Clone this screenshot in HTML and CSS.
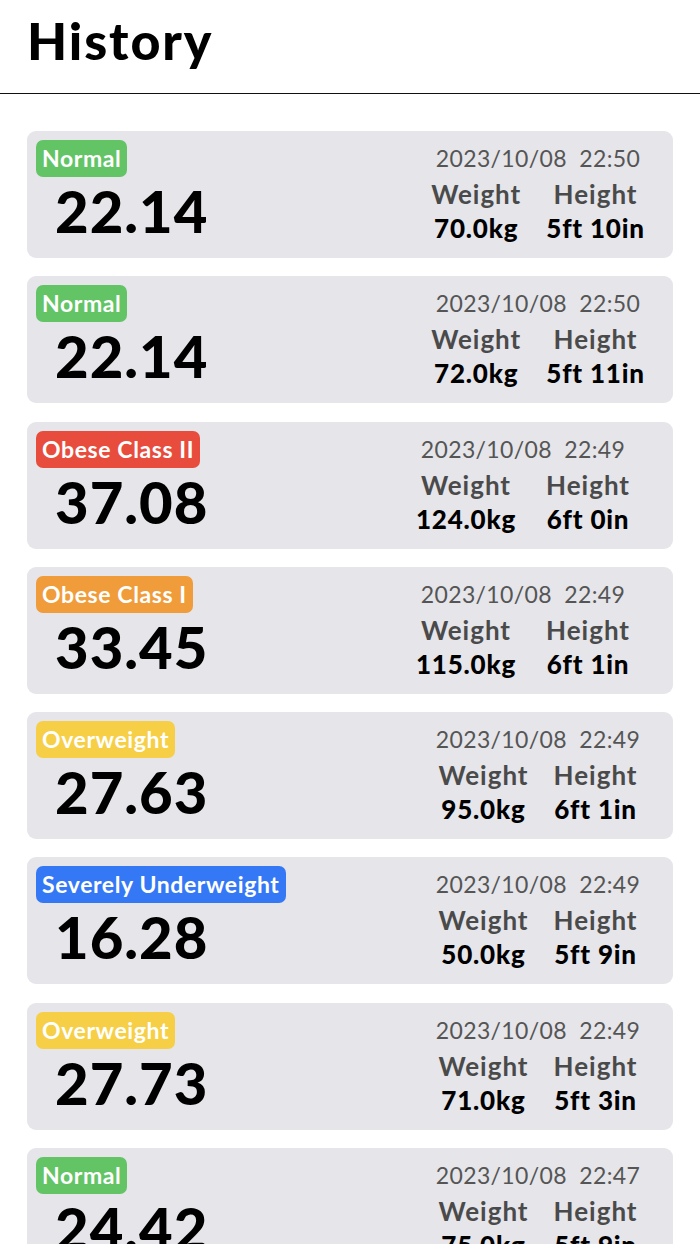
FILE: index.html
```html
<!DOCTYPE html>
<html>
<head>
<meta charset="utf-8">
<link rel="stylesheet" href="styles.css">
</head>
<body>
<header class="top">
  <h1 class="title">History</h1>
</header>
<main class="list">
  <div class="card">
    <div class="left"><span class="badge green">Normal</span><div class="bmi">22.14</div></div>
    <div class="info"><div class="date">2023/10/08&nbsp;&nbsp;22:50</div>
      <div class="row"><div class="col"><div class="lbl">Weight</div><div class="val">70.0kg</div></div><div class="col"><div class="lbl">Height</div><div class="val">5ft 10in</div></div></div></div>
  </div>
  <div class="card">
    <div class="left"><span class="badge green">Normal</span><div class="bmi">22.14</div></div>
    <div class="info"><div class="date">2023/10/08&nbsp;&nbsp;22:50</div>
      <div class="row"><div class="col"><div class="lbl">Weight</div><div class="val">72.0kg</div></div><div class="col"><div class="lbl">Height</div><div class="val">5ft 11in</div></div></div></div>
  </div>
  <div class="card">
    <div class="left"><span class="badge red">Obese Class II</span><div class="bmi">37.08</div></div>
    <div class="info wide"><div class="date">2023/10/08&nbsp;&nbsp;22:49</div>
      <div class="row"><div class="col"><div class="lbl">Weight</div><div class="val">124.0kg</div></div><div class="col"><div class="lbl">Height</div><div class="val">6ft 0in</div></div></div></div>
  </div>
  <div class="card">
    <div class="left"><span class="badge orange">Obese Class I</span><div class="bmi">33.45</div></div>
    <div class="info wide"><div class="date">2023/10/08&nbsp;&nbsp;22:49</div>
      <div class="row"><div class="col"><div class="lbl">Weight</div><div class="val">115.0kg</div></div><div class="col"><div class="lbl">Height</div><div class="val">6ft 1in</div></div></div></div>
  </div>
  <div class="card">
    <div class="left"><span class="badge yellow">Overweight</span><div class="bmi">27.63</div></div>
    <div class="info"><div class="date">2023/10/08&nbsp;&nbsp;22:49</div>
      <div class="row"><div class="col"><div class="lbl">Weight</div><div class="val">95.0kg</div></div><div class="col"><div class="lbl">Height</div><div class="val">6ft 1in</div></div></div></div>
  </div>
  <div class="card">
    <div class="left"><span class="badge blue">Severely Underweight</span><div class="bmi">16.28</div></div>
    <div class="info"><div class="date">2023/10/08&nbsp;&nbsp;22:49</div>
      <div class="row"><div class="col"><div class="lbl">Weight</div><div class="val">50.0kg</div></div><div class="col"><div class="lbl">Height</div><div class="val">5ft 9in</div></div></div></div>
  </div>
  <div class="card">
    <div class="left"><span class="badge yellow">Overweight</span><div class="bmi">27.73</div></div>
    <div class="info"><div class="date">2023/10/08&nbsp;&nbsp;22:49</div>
      <div class="row"><div class="col"><div class="lbl">Weight</div><div class="val">71.0kg</div></div><div class="col"><div class="lbl">Height</div><div class="val">5ft 3in</div></div></div></div>
  </div>
  <div class="card">
    <div class="left"><span class="badge green">Normal</span><div class="bmi">24.42</div></div>
    <div class="info"><div class="date">2023/10/08&nbsp;&nbsp;22:47</div>
      <div class="row"><div class="col"><div class="lbl">Weight</div><div class="val">75.0kg</div></div><div class="col"><div class="lbl">Height</div><div class="val">5ft 9in</div></div></div></div>
  </div>
</main>
</body>
</html>
```
FILE: styles.css
```css
html, body {
  margin: 0;
  padding: 0;
  background: #ffffff;
  overflow: hidden;
}
body {
  font-family: Lato, "Noto Sans", sans-serif;
  color: #000;
  width: 700px;
  height: 1244px;
}
.top {
  height: 94px;
  border-bottom: 1.5px solid #111;
  box-sizing: border-box;
  padding-left: 27px;
}
.title {
  margin: 0;
  font-size: 52px;
  font-weight: 900;
  line-height: 80px;
  letter-spacing: 1.9px;
}
.list {
  padding: 37px 27px 0;
  display: flex;
  flex-direction: column;
  gap: 18.3px;
}
.card {
  flex: none;
  height: 127px;
  background: #e5e5ea;
  border-radius: 9px;
  display: flex;
  box-sizing: border-box;
  padding: 9px 0 0 9px;
}
.left {
  display: flex;
  flex-direction: column;
  align-items: flex-start;
}
.badge {
  height: 37px;
  line-height: 37px;
  padding: 0 6px;
  border-radius: 7px;
  color: #fff;
  font-size: 23px;
  font-weight: 700;
  letter-spacing: 0.6px;
}
.green { background: #63c466; }
.red { background: #e74c3c; }
.orange { background: #f09c3a; }
.yellow { background: #f6cf46; }
.blue { background: #3478f6; }
.bmi {
  margin-left: 19px;
  font-size: 58px;
  font-weight: 900;
  line-height: 68px;
  letter-spacing: 1px;
}
.info {
  margin-left: auto;
  margin-right: 27px;
  width: 216px;
  display: flex;
  flex-direction: column;
  align-items: center;
  padding-top: 3px;
}
.info.wide {
  margin-right: 42px;
}
.info.wide .row {
  gap: 30px;
}
.date {
  font-size: 23px;
  color: #555;
  line-height: 30px;
  letter-spacing: 0.35px;
  white-space: nowrap;
}
.row {
  display: flex;
  gap: 25px;
  margin-top: 4px;
}
.col {
  display: flex;
  flex-direction: column;
  align-items: center;
}
.lbl {
  font-size: 26px;
  color: #4a4a4a;
  font-weight: 700;
  line-height: 34px;
  letter-spacing: 1px;
  white-space: nowrap;
}
.val {
  font-size: 26px;
  font-weight: 900;
  line-height: 34px;
  letter-spacing: 0.8px;
  white-space: nowrap;
}
```
